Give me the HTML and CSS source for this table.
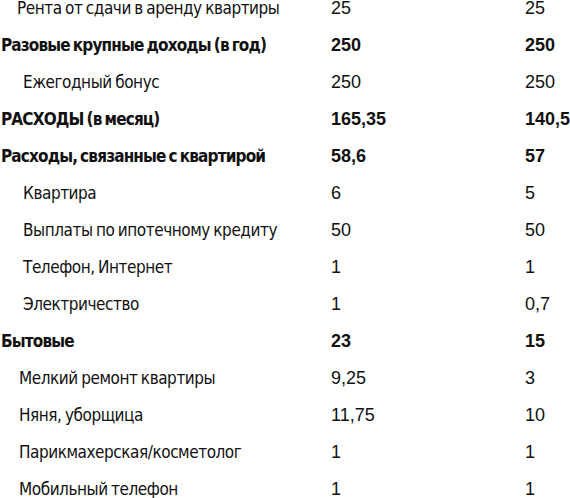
FILE: index.html
```html
<!DOCTYPE html>
<html lang="ru">
<head>
<meta charset="utf-8">
<title>Бюджет</title>
<link rel="stylesheet" href="styles.css">
</head>
<body>
<div class="table">
  <div class="row sub1"><span class="label">Рента от сдачи в аренду квартиры</span><span class="val">25</span><span class="val">25</span></div>
  <div class="row head"><span class="label">Разовые крупные доходы (в год)</span><span class="val">250</span><span class="val">250</span></div>
  <div class="row sub2"><span class="label">Ежегодный бонус</span><span class="val">250</span><span class="val">250</span></div>
  <div class="row head"><span class="label">РАСХОДЫ (в месяц)</span><span class="val">165,35</span><span class="val">140,5</span></div>
  <div class="row head"><span class="label">Расходы, связанные с квартирой</span><span class="val">58,6</span><span class="val">57</span></div>
  <div class="row sub2"><span class="label">Квартира</span><span class="val">6</span><span class="val">5</span></div>
  <div class="row sub2"><span class="label">Выплаты по ипотечному кредиту</span><span class="val">50</span><span class="val">50</span></div>
  <div class="row sub2"><span class="label">Телефон, Интернет</span><span class="val">1</span><span class="val">1</span></div>
  <div class="row sub2"><span class="label">Электричество</span><span class="val">1</span><span class="val">0,7</span></div>
  <div class="row head"><span class="label">Бытовые</span><span class="val">23</span><span class="val">15</span></div>
  <div class="row sub3"><span class="label">Мелкий ремонт квартиры</span><span class="val">9,25</span><span class="val">3</span></div>
  <div class="row sub3"><span class="label">Няня, уборщица</span><span class="val">11,75</span><span class="val">10</span></div>
  <div class="row sub3"><span class="label">Парикмахерская/косметолог</span><span class="val">1</span><span class="val">1</span></div>
  <div class="row sub3"><span class="label">Мобильный телефон</span><span class="val">1</span><span class="val">1</span></div>
</div>
</body>
</html>
```
FILE: styles.css
```css
html, body {
  margin: 0;
  padding: 0;
  background: #ffffff;
  color: #111111;
}
body {
  overflow: hidden;
}
.table {
  margin-top: -10px;
  display: flex;
  flex-direction: column;
}
.row {
  display: grid;
  grid-template-columns: 331px 194px 1fr;
  height: 37px;
  line-height: 37px;
  white-space: nowrap;
}
.label {
  font-family: "DejaVu Sans Condensed", "DejaVu Sans", sans-serif;
  font-stretch: condensed;
  font-size: 17px;
  letter-spacing: -0.45px;
  word-spacing: -1px;
}
.val {
  font-family: "Liberation Sans", Arial, sans-serif;
  font-size: 18px;
}
.head .label, .head .val {
  font-weight: bold;
}
.head .label {
  padding-left: 1px;
  letter-spacing: -0.85px;
  word-spacing: -1.5px;
}
.sub1 .label { padding-left: 17px; }
.sub2 .label { padding-left: 23px; }
.sub3 .label { padding-left: 19px; }
```
